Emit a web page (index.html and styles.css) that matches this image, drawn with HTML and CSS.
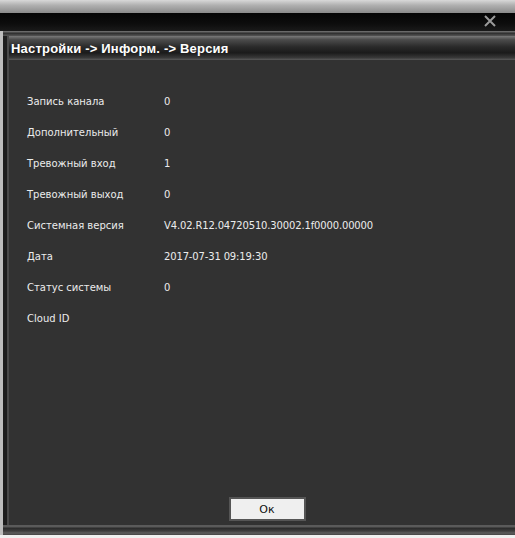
FILE: index.html
```html
<!DOCTYPE html>
<html>
<head>
<meta charset="utf-8">
<link rel="stylesheet" href="styles.css">
</head>
<body>
<div class="window">
  <div class="topstrip"></div>
  <div class="topbar">
    <svg class="close" width="14" height="14" viewBox="0 0 14 14"><path d="M2 2L12 12M12 2L2 12" stroke="#9a9a9a" stroke-width="2"/></svg>
  </div>
  <div class="frame">
    <div class="sep"></div>
    <div class="titlebar"><span class="title">Настройки -&gt; Информ. -&gt; Версия</span></div>
    <div class="content">
      <div class="rows">
        <div class="row"><span class="label">Запись канала</span><span class="value">0</span></div>
        <div class="row"><span class="label">Дополнительный</span><span class="value">0</span></div>
        <div class="row"><span class="label">Тревожный вход</span><span class="value">1</span></div>
        <div class="row"><span class="label">Тревожный выход</span><span class="value">0</span></div>
        <div class="row"><span class="label">Системная версия</span><span class="value">V4.02.R12.04720510.30002.1f0000.00000</span></div>
        <div class="row"><span class="label">Дата</span><span class="value">2017-07-31 09:19:30</span></div>
        <div class="row"><span class="label">Статус системы</span><span class="value">0</span></div>
        <div class="row"><span class="label">Cloud ID</span><span class="value"></span></div>
      </div>
      <div class="footer"><button class="ok">Ок</button></div>
    </div>
    <div class="bottom"></div>
  </div>
  <div class="white"></div>
</div>
</body>
</html>
```
FILE: styles.css
```css
html, body { margin: 0; padding: 0; background: #2b2b2b; }
body { width: 515px; height: 538px; overflow: hidden; font-family: "DejaVu Sans", sans-serif; }
.window { width: 515px; height: 538px; display: flex; flex-direction: column; }
.topstrip { height: 13px; background: linear-gradient(#d8d8d8, #b0b0b0 40%, #8a8a8a); }
.topbar { height: 18px; background: linear-gradient(#050505, #0d0d0d 60%, #1a1a1a); display: flex; justify-content: flex-end; align-items: flex-start; padding-right: 18px; }
.close { display: block; margin-top: 1px; }
.frame { flex: 1; display: flex; flex-direction: column; border-left: 3px solid #bdbdbd; background: #303030; box-shadow: inset 4px 0 0 #1d1d1d, inset 6px 0 0 #4a4a4a; }
.sep { height: 5px; background: linear-gradient(#6a6a6a, #6a6a6a 20%, #2a2a2a 40%, #3a3a3a 60%, #555 100%); }
.titlebar { height: 24px; margin-left: 6px; display: flex; align-items: center; padding-left: 2px;
  background: linear-gradient(#7a7a7a, #4c4c4c 15%, #2a2a2a 45%, #1b1b1b 70%, #383838 90%, #5a5a5a); }
.title { color: #fff; font-family: "Liberation Sans", sans-serif; font-weight: bold; font-size: 13px; letter-spacing: 0.2px; }
.content { flex: 1; display: flex; flex-direction: column; margin-left: 6px; background: #323232; }
.rows { padding-top: 26px; padding-left: 18px; display: flex; flex-direction: column; }
.row { height: 31px; display: flex; align-items: center; font-family: "DejaVu Sans", sans-serif; font-size: 10px; color: #ececec; }
.label { width: 137px; }
.value { letter-spacing: -0.15px; }
.footer { margin-top: auto; display: flex; justify-content: center; padding-bottom: 4px; padding-left: 10px; }
.ok { width: 77px; height: 24px; background: #efefef; border: 2px solid #555; color: #111; font-family: "DejaVu Sans", sans-serif; font-size: 11px; padding: 0; }
.bottom { height: 10px; background: linear-gradient(#5a5a5a, #5a5a5a 20%, #2a2a2a 30%, #3d3d3d 60%, #5c5c5c 80%, #444); }
.white { height: 3px; background: #f0f0f0; }
```
